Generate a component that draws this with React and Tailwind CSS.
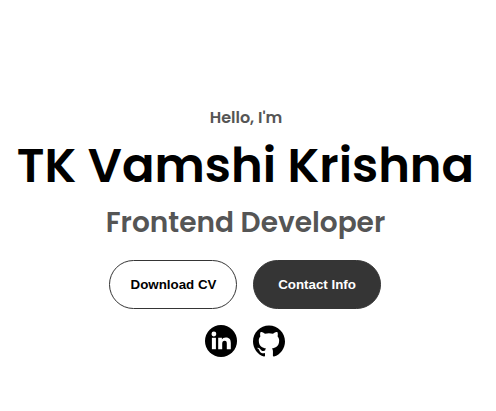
import { SiGithub } from "react-icons/si";

const heading = "font-[Poppins,Inter,sans-serif] font-semibold whitespace-nowrap";
const button =
  "h-[49px] w-32 rounded-[32px] border border-[#353535] font-['Liberation_Sans',Arial,sans-serif] text-[13.333px] font-bold";

function LinkedIn() {
  return (
    <svg viewBox="0 0 32 32" className="size-8">
      <circle cx="16" cy="16" r="16" fill="#000" />
      <g fill="#fff">
        <circle cx="8.9" cy="9" r="2.4" />
        <rect x="6.9" y="12.8" width="4" height="11.4" />
        <path d="M13.2 12.8h3.7v1.6c.6-1 1.9-1.9 3.9-1.9 3.9 0 5 2.2 5 5.6v6.1h-4v-5.5c0-1.7-.3-3-2.1-3s-2.5 1.3-2.5 3v5.5h-4z" />
      </g>
    </svg>
  );
}

export default function App() {
  return (
    <main className="flex h-[411px] w-full flex-col items-center bg-white pr-1.5 pt-[106px] text-black">
      <p className={`${heading} h-6 pl-0.5 text-[16px] leading-6 text-[#555555]`}>Hello, I'm</p>
      <h1 className={`${heading} h-[72px] pl-px text-[48px] leading-[72px]`}>TK Vamshi Krishna</h1>
      <p className={`${heading} h-[42px] pl-px text-[28px] leading-[42px] text-[#555555]`}>
        Frontend Developer
      </p>
      <div className="mt-4 flex gap-4">
        <button className={`${button} bg-white pl-px text-black`}>Download CV</button>
        <button className={`${button} bg-[#353535] text-white`}>Contact Info</button>
      </div>
      <div className="mt-4 flex gap-4">
        <a aria-label="LinkedIn">
          <LinkedIn />
        </a>
        <a aria-label="GitHub">
          <SiGithub className="size-8" />
        </a>
      </div>
    </main>
  );
}
